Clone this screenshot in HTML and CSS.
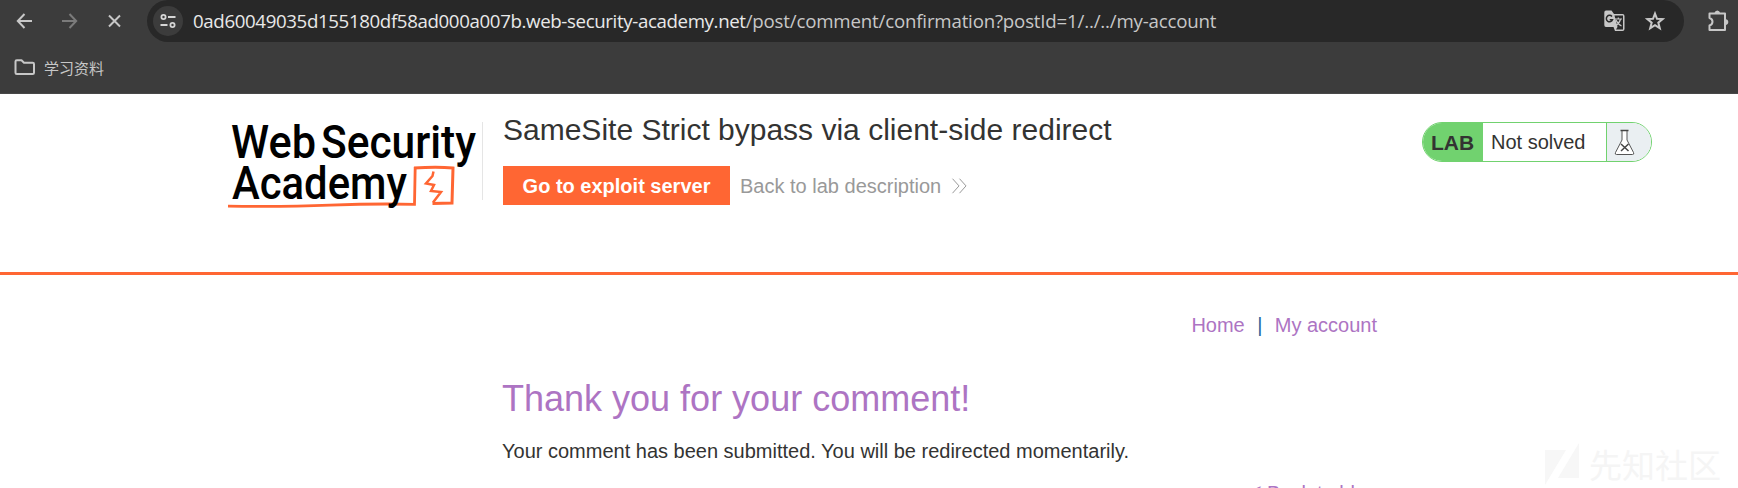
FILE: index.html
```html
<!DOCTYPE html>
<html lang="en">
<head>
<meta charset="utf-8">
<title>SameSite Strict bypass via client-side redirect</title>
<link rel="stylesheet" href="styles.css">
</head>
<body>
<div class="browser">
  <div class="toolbar">
    <svg class="nav" width="148" height="42" viewBox="0 0 148 42" fill="none" stroke="#c7c7c7" stroke-width="2">
      <path d="M32 21H18M24.500 14L17.800 21L24.500 28"/>
      <path stroke="#7b7b7b" d="M62 21H76M69.500 14L76.200 21L69.500 28"/>
      <path d="M109 15.500L120 26.500M120 15.500L109 26.500"/>
    </svg>
    <div class="omnibox">
      <span class="site-info">
        <svg width="16" height="16" viewBox="0 0 16 16" fill="none" stroke="#d6d6d6" stroke-width="1.800">
          <circle cx="3.500" cy="4" r="2.100"/><path d="M8 4H15.500M.5 12H7.500"/><circle cx="12.500" cy="12" r="2.100"/>
        </svg>
      </span>
      <div class="url"><span class="host">0ad60049035d155180df58ad000a007b.web-security-academy.net</span><span class="path">/post/comment/confirmation?postId=1/../../my-account</span></div>
      <svg class="translate" width="21" height="22" viewBox="0 0 21 22">
        <path fill="#c7c7c7" d="M2 .5H7.500L10 4H18.500Q20.500 4 20.500 6V19Q20.500 21 18.500 21H11L9.500 17H2Q.3 17 .3 15V2.500Q.3 .5 2 .5Z"/>
        <path fill="#282828" d="M10.500 5.500H19V19.500H12L13.500 17Z"/>
        <path fill="none" stroke="#282828" stroke-width="1.500" d="M8 6.500A3.200 3.200 0 1 0 8.500 9.800H5.700"/>
        <path fill="none" stroke="#c7c7c7" stroke-width="1.200" d="M10.500 9H18M14.300 7.500V9M16.500 9.500Q15 14 11 16M12 10Q14 14.500 17.500 16"/>
      </svg>
      <svg class="star" width="22" height="22" viewBox="0 0 22 22" fill="none" stroke="#c7c7c7" stroke-width="2"><path d="M11 3.600L13 8.800L18.600 9.100L14.300 12.600L15.800 18.200L11 15.100L6.200 18.200L7.700 12.600L3.400 9.100L9 8.800Z"/></svg>
    </div>
    <svg class="extensions" width="24" height="24" viewBox="0 0 24 24">
      <path fill="none" stroke="#c7c7c7" stroke-width="2" stroke-linejoin="round" d="M3.500 4.500H19V21H3.500V16.500Q6.500 15.500 6.500 12.700T3.500 9Z"/>
      <path fill="#c7c7c7" d="M8.500 4Q9 1.500 11.300 1.500T14.100 4ZM19.500 10Q22.300 10.500 22.300 13T19.500 16Z"/>
    </svg>
  </div>
  <div class="bookmarks">
    <svg width="22" height="17" viewBox="0 0 22 17" fill="none" stroke="#c7c7c7" stroke-width="2"><path stroke-linejoin="round" d="M1.500 2.500Q1.500 1.200 2.800 1.200H7.500L10 3.700H18.700Q20 3.700 20 5V13.700Q20 15 18.700 15H2.800Q1.500 15 1.500 13.700Z"/></svg>
    <span>学习资料</span>
  </div>
</div>
<header class="lab-header">
  <svg class="logo" width="254" height="94" viewBox="228 118 254 94">
    <g class="wordmark">
      <text x="231" y="158" textLength="85" lengthAdjust="spacingAndGlyphs">Web</text>
      <text x="321" y="158" textLength="155" lengthAdjust="spacingAndGlyphs">Security</text>
    </g>
    <g fill="none" stroke="#ff6633">
      <path stroke-width="2.800" d="M228 206.200Q285 207 330 205.200T414.500 204.300L415.200 167"/>
      <path stroke-width="3" d="M414 168Q437 166.500 453 168L452 203L432.500 203.500"/>
      <path stroke-width="2.500" d="M433.500 171.500L432.500 176L426 183.500L434 185L431 191L441 192L433 202.500"/>
    </g>
    <g class="wordmark"><text x="232" y="199" textLength="175" lengthAdjust="spacingAndGlyphs">Academy</text></g>
  </svg>
  <div class="lab-title">
    <h2>SameSite Strict bypass via client-side redirect</h2>
    <div class="actions">
      <a class="button"><span>Go to exploit server</span></a>
      <a class="back">Back to lab description</a>
      <svg width="17" height="16" viewBox="0 0 17 16" fill="none" stroke="#999"><path d="M1.500 .7L8 7.900L1.500 15.200M8.500 .7L15 7.900L8.500 15.200"/></svg>
    </div>
  </div>
  <div class="status">
    <b>LAB</b><span>Not solved</span>
    <i><svg width="22" height="27" viewBox="0 0 22 27"><path fill="#fff" stroke="#555" d="M8 1.500V11L1.500 23.500Q.5 25.500 2.500 25.500H18.500Q20.500 25.500 19.500 23.500L13 11V1.500"/><path fill="none" stroke="#444" stroke-width="1.500" d="M6.500 1.500H14.500M7 15L14.500 22M14.500 15L7 22"/></svg></i>
  </div>
</header>
<main>
  <nav><a>Home</a><span class="sep">|</span><a>My account</a></nav>
  <h1>Thank you for your comment!</h1>
  <p>Your comment has been submitted. You will be redirected momentarily.</p>
  <div class="blog-link"><span class="angle">&lt;</span><a>Back to blog</a></div>
</main>
<div class="watermark">
  <svg width="35" height="42" viewBox="0 0 35 42" fill="#f7f7f7"><path d="M0 7H21L0 42ZM34 0V35H13Z"/></svg>
  <span>先知社区</span>
</div>
</body>
</html>
```
FILE: styles.css
```css
* { box-sizing: border-box; }
html, body { height: 488px; overflow: hidden; }
body { margin: 0; background: #fff; color: #333332; font-family: "Liberation Sans", Arial, sans-serif; position: relative; }
svg { display: block; flex: none; }
.browser { height: 94px; background: #3c3c3c; border-bottom: 1px solid #484848; }
.toolbar { display: flex; height: 42px; }
.omnibox { width: 1537px; height: 42px; border-radius: 21px; background: #282828; display: flex; align-items: center; padding-left: 6px; }
.nav { margin-right: -1px; }
.site-info { width: 30px; height: 30px; border-radius: 50%; background: #3c3c3c; display: grid; place-items: center; }
.url { width: 1422px; padding-left: 10px; font: 18.700px/30px "Open Sans", "Noto Sans", sans-serif; white-space: nowrap; }
.host { color: #e9e9e9; letter-spacing: -.37px; }
.path { color: #c7c7c7; letter-spacing: -.19px; }
.translate { margin-left: -1px; }
.star { margin-left: 19px; }
.extensions { margin: 9px 0 0 22px; }
.bookmarks { display: flex; align-items: center; height: 51px; padding-left: 14px; gap: 8px; color: #c7c7c7; font: 15px/20px "Noto Sans CJK SC", sans-serif; }
.lab-header { display: flex; align-items: flex-start; height: 181px; border-bottom: 3px solid #ff6633; padding: 24px 86px 0 228px; }
.logo { overflow: visible; }
.wordmark { font: 500 47px Roboto, sans-serif; fill: #000; }
.lab-title { margin-top: 4px; border-left: 1px solid #e5e5e5; height: 78px; padding-left: 20px; width: 940px; }
h2 { margin: -9px 0 0; font-size: 30px; line-height: 34px; font-weight: 400; white-space: nowrap; }
.actions { display: flex; align-items: center; margin-top: 19px; color: #999; font-size: 20px; white-space: nowrap; }
.button { width: 227px; height: 39px; background: #ff6633; color: #fff; font-weight: 700; display: grid; place-items: center; margin-right: 10px; }
.button span, .back { padding-top: 1px; }
.back { width: 211px; }
.status { margin: 4px 0 0 auto; width: 230px; height: 40px; border: 1px solid #71d26f; border-radius: 20px; overflow: hidden; display: flex; line-height: 39px; font-size: 20px; }
.status b { width: 60px; background: #71d26f; text-align: center; font-size: 21px; padding-right: 1px; }
.status span { flex: 1; padding-left: 8px; }
.status i { width: 45px; border-left: 1px solid #71d26f; background: #eaeff2; padding: 6px 0 0 7px; }
main { padding-left: 502px; }
nav { display: flex; margin: 38px 361px 0 auto; justify-content: flex-end; font-size: 20px; line-height: 24px; color: #ad74c3; }
.sep { width: 30px; text-align: center; color: #29679e; }
h1 { margin: 41px 0 0; font-size: 36px; line-height: 42px; font-weight: 400; color: #ad74c3; white-space: nowrap; }
p { margin: 19px 0 0; font-size: 20px; line-height: 24px; white-space: nowrap; }
.blog-link { display: flex; margin: 18px 0 0 750px; gap: 14px; color: #ad74c3; font-size: 20px; line-height: 24px; white-space: nowrap; }
.angle { width: 1px; font-size: 16px; line-height: 20px; }
.watermark { position: absolute; left: 1545px; top: 443px; display: flex; gap: 9px; align-items: center; color: #f5f5f5; font: 33px/40px "Noto Sans CJK SC", sans-serif; }
```
